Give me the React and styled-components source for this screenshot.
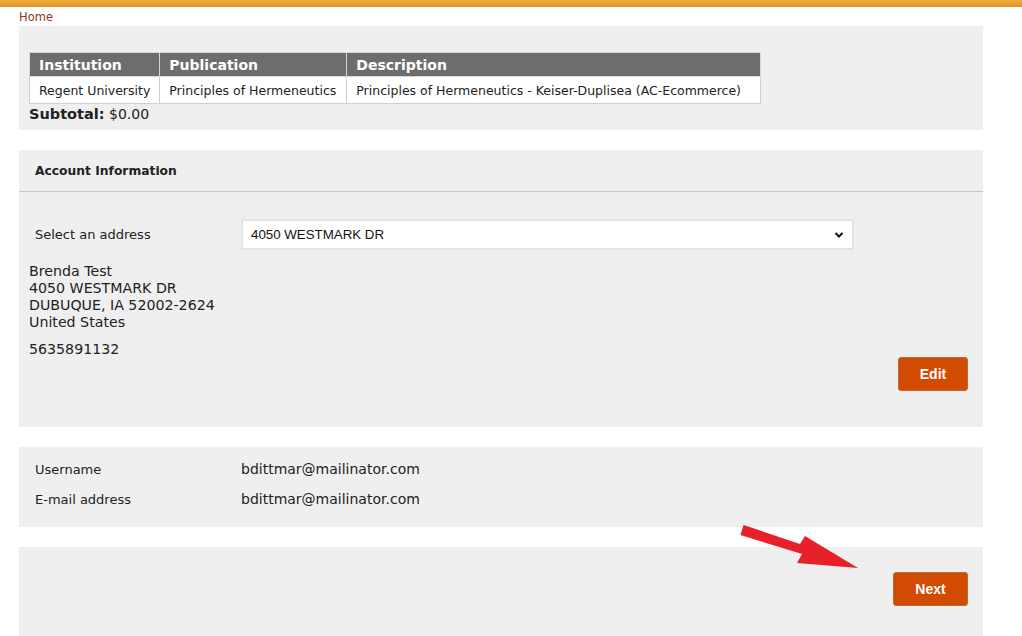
import React from "react";
import styled, { createGlobalStyle } from "styled-components";

const Global = createGlobalStyle`
  html, body { margin: 0; padding: 0; background: #fff; }
  body { font-family: Verdana, "DejaVu Sans", sans-serif; color: #222; overflow: hidden; }
  #root { height: 636px; position: relative; }
`;

const TopBar = styled.div`
  height: 7px;
  background: linear-gradient(#f3ab3f, #dc9524);
`;

const Page = styled.div`
  padding: 0 39px 0 19px;
`;

const Crumb = styled.a`
  display: block;
  box-sizing: border-box;
  font-size: 11.5px;
  line-height: 18px;
  padding-top: 1px;
  height: 19px;
  color: #8c3a17;
  text-decoration: none;
`;

const Panel = styled.section`
  background: #efefef;
  margin-bottom: 20px;
  padding: ${(p) => p.$pad || "0"};
  min-height: ${(p) => p.$minH || "auto"};
  box-sizing: border-box;
`;

const Table = styled.table`
  border-collapse: collapse;
  margin-left: 10px;
  font-size: 12.5px;
`;

const Th = styled.th`
  background: #6d6d6d;
  color: #fff;
  font-weight: bold;
  font-size: 14px;
  text-align: left;
  height: 24px;
  padding: 0 9px;
  border: 1px solid #d6d6d6;
  width: ${(p) => p.$w};
  box-sizing: border-box;
`;

const Td = styled.td`
  background: #fff;
  height: 26px;
  padding: 0 9px;
  border: 1px solid #cfcfcf;
  white-space: nowrap;
`;

const Subtotal = styled.div`
  margin-left: 10px;
  font-size: 14px;
  line-height: 20px;
  b { font-size: 14.5px; }
`;

const PanelHeader = styled.h2`
  margin: 0;
  height: 42px;
  box-sizing: border-box;
  border-bottom: 1px solid #c8c8c8;
  font-size: 12.3px;
  font-weight: bold;
  padding-left: 16px;
  display: flex;
  align-items: center;
`;

const FieldRow = styled.div`
  display: grid;
  grid-template-columns: 206px 613px;
  align-items: center;
  padding-left: 16px;
  height: ${(p) => p.$h || "30px"};
  margin-top: ${(p) => p.$mt || "0"};
  font-size: 13px;
`;

const Value = styled.span`
  font-size: 14px;
`;

const Select = styled.div`
  height: 31px;
  box-sizing: border-box;
  background: #fff;
  border: 2px solid #e3e3e3;
  display: flex;
  align-items: center;
  justify-content: space-between;
  padding: 0 8px 0 8px;
  font-family: Arial, "Liberation Sans", sans-serif;
  font-size: 13.3px;
  color: #111;
`;

const AddressBlock = styled.div`
  padding-left: 10px;
  margin-top: 13px;
  font-size: 14.2px;
  line-height: 17px;
`;

const Phone = styled.p`
  margin: 10px 0 0;
`;

const ButtonRow = styled.div`
  display: flex;
  justify-content: flex-end;
  padding-right: 15px;
  margin-top: ${(p) => p.$mt || "0"};
`;

const OrangeButton = styled.button`
  width: ${(p) => p.$w};
  height: 34px;
  background: #d24b03;
  border: 1px solid #b7702f;
  border-radius: 3px;
  color: #fff;
  font-family: Arial, "Liberation Sans", sans-serif;
  font-weight: bold;
  font-size: 14px;
  cursor: pointer;
`;

const Arrow = styled.svg`
  position: absolute;
  left: 0;
  top: 0;
  pointer-events: none;
`;

export default function App() {
  return (
    <>
      <Global />
      <TopBar />
      <Page>
        <Crumb href="#">Home</Crumb>
        <Panel $pad="26px 0 6px">
          <Table>
            <thead>
              <tr>
                <Th $w="130px">Institution</Th>
                <Th $w="187px">Publication</Th>
                <Th $w="414px">Description</Th>
              </tr>
            </thead>
            <tbody>
              <tr>
                <Td>Regent University</Td>
                <Td>Principles of Hermeneutics</Td>
                <Td>Principles of Hermeneutics - Keiser-Duplisea (AC-Ecommerce)</Td>
              </tr>
            </tbody>
          </Table>
          <Subtotal>
            <b>Subtotal:</b> $0.00
          </Subtotal>
        </Panel>

        <Panel $minH="277px">
          <PanelHeader>Account Information</PanelHeader>
          <FieldRow $h="31px" $mt="27px">
            <span>Select an address</span>
            <Select>
              <span>4050 WESTMARK DR</span>
              <svg width="10" height="8" viewBox="0 0 10 8">
                <path d="M1.5 2 L5 5.5 L8.5 2" stroke="#111" strokeWidth="2" fill="none" />
              </svg>
            </Select>
          </FieldRow>
          <AddressBlock>
            Brenda Test
            <br />
            4050 WESTMARK DR
            <br />
            DUBUQUE, IA 52002-2624
            <br />
            United States
            <Phone>5635891132</Phone>
          </AddressBlock>
          <ButtonRow $mt="-1px">
            <OrangeButton $w="70px">Edit</OrangeButton>
          </ButtonRow>
        </Panel>

        <Panel $pad="7px 0 13px">
          <FieldRow>
            <span>Username</span>
            <Value>bdittmar@mailinator.com</Value>
          </FieldRow>
          <FieldRow>
            <span>E-mail address</span>
            <Value>bdittmar@mailinator.com</Value>
          </FieldRow>
        </Panel>

        <Panel $pad="25px 0 40px">
          <ButtonRow>
            <OrangeButton $w="75px">Next</OrangeButton>
          </ButtonRow>
        </Panel>
      </Page>
      <Arrow width="1022" height="636" viewBox="0 0 1022 636">
        <polygon
          points="743.6,525 800,544 805,536 858,568 797,563 802,554 740.4,535"
          fill="#e8202a"
        />
      </Arrow>
    </>
  );
}
